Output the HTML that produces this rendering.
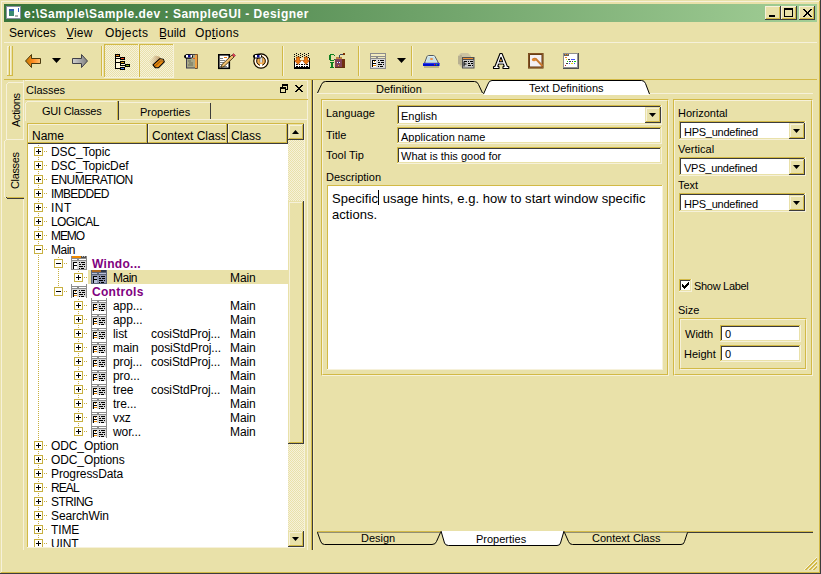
<!DOCTYPE html>
<html><head><meta charset="utf-8">
<style>
*{margin:0;padding:0;box-sizing:border-box}
html,body{width:821px;height:574px;overflow:hidden;background:#E9E1A9}
body{position:relative;font-family:"Liberation Sans",sans-serif;font-size:11px;color:#000}
.a{position:absolute}
.t{position:absolute;white-space:pre;line-height:13px;font-size:11px;margin-left:-1px}
.hl{background:#F6F1DA}
.sh{background:#D2B946}
.dk{background:#3C3C3C}
.wh{background:#fff}
.fc{background:#E9E1A9}
u{text-decoration:none;border-bottom:1px solid #000}
</style></head><body>

<!-- window frame -->
<div class="a hl" style="left:1px;top:1px;width:818px;height:1px"></div>
<div class="a hl" style="left:1px;top:1px;width:1px;height:571px"></div>
<div class="a sh" style="left:1px;top:572px;width:819px;height:1px"></div>
<div class="a sh" style="left:819px;top:1px;width:1px;height:572px"></div>
<div class="a dk" style="left:0;top:573px;width:821px;height:1px"></div>
<div class="a dk" style="left:820px;top:0;width:1px;height:574px"></div>

<!-- title bar -->
<div class="a" style="left:4px;top:4px;width:813px;height:18px;background:linear-gradient(to right,#38743A,#A2CE96)"></div>
<svg class="a" style="left:6px;top:6px" width="15" height="13" viewBox="0 0 15 13">
<rect x="0" y="0" width="15" height="13" fill="#fff"/>
<rect x="0.5" y="0.5" width="14" height="12" fill="none" stroke="#8890A0"/>
<rect x="3" y="3" width="5" height="7" fill="#3A8A70"/>
<rect x="3" y="3" width="5" height="2" fill="#3060B0"/>
<rect x="9" y="9" width="3" height="2" fill="#B0B0B0"/>
<rect x="12" y="2" width="1" height="4" fill="#3060C0"/>
</svg>
<div class="t" style="left:25px;top:6px;font-weight:bold;font-size:12px;letter-spacing:0.5px;color:#fff;line-height:17px">e:\Sample\Sample.dev : SampleGUI - Designer</div>


<!-- title buttons -->
<div class="a" style="left:765px;top:6px;width:16px;height:14px;background:#3C3C3C"></div>
<div class="a" style="left:765px;top:6px;width:15px;height:13px;background:#F6F1DA"></div>
<div class="a" style="left:766px;top:7px;width:14px;height:12px;background:#D2B946"></div>
<div class="a" style="left:766px;top:7px;width:13px;height:11px;background:#E9E1A9"></div>
<div class="a" style="left:769px;top:15px;width:6px;height:2px;background:#000"></div>

<div class="a" style="left:781px;top:6px;width:16px;height:14px;background:#3C3C3C"></div>
<div class="a" style="left:781px;top:6px;width:15px;height:13px;background:#F6F1DA"></div>
<div class="a" style="left:782px;top:7px;width:14px;height:12px;background:#D2B946"></div>
<div class="a" style="left:782px;top:7px;width:13px;height:11px;background:#E9E1A9"></div>
<div class="a" style="left:784px;top:8px;width:9px;height:9px;border:1px solid #000;border-top-width:2px"></div>

<div class="a" style="left:799px;top:6px;width:16px;height:14px;background:#3C3C3C"></div>
<div class="a" style="left:799px;top:6px;width:15px;height:13px;background:#F6F1DA"></div>
<div class="a" style="left:800px;top:7px;width:14px;height:12px;background:#D2B946"></div>
<div class="a" style="left:800px;top:7px;width:13px;height:11px;background:#E9E1A9"></div>
<svg class="a" style="left:803px;top:9px" width="9" height="8" viewBox="0 0 9 8" shape-rendering="crispEdges">
<path d="M0 0h2v1h-2zM7 0h2v1h-2zM1 1h2v1h-2zM6 1h2v1h-2zM2 2h2v1h-2zM5 2h2v1h-2zM3 3h3v2h-3zM2 5h2v1h-2zM5 5h2v1h-2zM1 6h2v1h-2zM6 6h2v1h-2zM0 7h2v1h-2zM7 7h2v1h-2z" fill="#000"/>
</svg>

<!-- menu -->
<div class="t" style="left:10px;top:26px;font-size:12px;line-height:15px;letter-spacing:0.1px">Services</div>
<div class="t" style="left:67px;top:26px;font-size:12px;line-height:15px;letter-spacing:0.2px">View</div>
<div class="t" style="left:106px;top:26px;font-size:12px;line-height:15px;letter-spacing:0.4px">Objects</div>
<div class="t" style="left:160px;top:26px;font-size:12px;line-height:15px;letter-spacing:0px">Build</div>
<div class="t" style="left:196px;top:26px;font-size:12px;line-height:15px;letter-spacing:0.4px">Options</div>
<div class="a" style="left:67px;top:38px;width:6px;height:1px;background:#000"></div>
<div class="a" style="left:160px;top:38px;width:6px;height:1px;background:#000"></div>
<div class="a" style="left:212px;top:38px;width:4px;height:1px;background:#000"></div>

<!-- toolbar -->
<div class="a hl" style="left:7px;top:46px;width:1px;height:30px"></div>
<div class="a hl" style="left:7px;top:46px;width:2px;height:1px"></div>
<div class="a sh" style="left:9px;top:46px;width:1px;height:30px"></div>
<div class="a sh" style="left:7px;top:75px;width:3px;height:1px"></div>
<div class="a hl" style="left:10px;top:46px;width:1px;height:30px"></div>
<div class="a sh" style="left:12px;top:46px;width:1px;height:30px"></div>
<div class="a sh" style="left:10px;top:75px;width:3px;height:1px"></div>

<svg class="a" style="left:24px;top:53px" width="18" height="16" viewBox="0 0 18 16">
<defs><linearGradient id="gb" x1="0" x2="1"><stop offset="0" stop-color="#C07800"/><stop offset="0.5" stop-color="#FF8A20"/><stop offset="1" stop-color="#FFC070"/></linearGradient>
<linearGradient id="gf" x1="0" x2="1"><stop offset="0" stop-color="#D0D0D0"/><stop offset="1" stop-color="#808080"/></linearGradient></defs>
<path d="M1.5 8 L7.5 1.5 V5.5 H16.5 V10.5 H7.5 V14.5 Z" fill="url(#gb)" stroke="#4A3A10" stroke-width="1"/>
</svg>
<svg class="a" style="left:52px;top:58px" width="9" height="5" viewBox="0 0 9 5"><path d="M0 0H9L4.5 5Z" fill="#000"/></svg>
<svg class="a" style="left:71px;top:53px" width="18" height="16" viewBox="0 0 18 16">
<path d="M16.5 8 L10.5 1.5 V5.5 H1.5 V10.5 H10.5 V14.5 Z" fill="url(#gf)" stroke="#404048" stroke-width="1"/>
</svg>
<div class="a sh" style="left:101px;top:46px;width:1px;height:30px"></div>
<div class="a hl" style="left:102px;top:46px;width:1px;height:30px"></div>

<!-- pressed buttons -->
<div class="a" style="left:104px;top:44px;width:35px;height:34px;background:#F6F1DA"></div>
<div class="a" style="left:104px;top:44px;width:34px;height:33px;background:#D2B946"></div>
<div class="a" style="left:105px;top:45px;width:33px;height:32px;background-color:#EDE6BC;background-image:repeating-conic-gradient(#F6F1DA 0 25%,#E9E1A9 0 50%);background-size:2px 2px"></div>
<div class="a" style="left:139px;top:44px;width:35px;height:34px;background:#F6F1DA"></div>
<div class="a" style="left:139px;top:44px;width:34px;height:33px;background:#D2B946"></div>
<div class="a" style="left:140px;top:45px;width:33px;height:32px;background-image:repeating-conic-gradient(#F6F1DA 0 25%,#E9E1A9 0 50%);background-size:2px 2px"></div>

<!-- tree icon -->
<svg class="a" style="left:115px;top:54px" width="16" height="16" viewBox="0 0 16 16" shape-rendering="crispEdges">
<rect x="1" y="3" width="4" height="11" fill="#FFF8DC"/>
<rect x="0" y="0" width="1" height="15" fill="#000"/>
<rect x="0" y="4" width="6" height="1" fill="#000"/><rect x="0" y="8" width="6" height="1" fill="#000"/><rect x="0" y="14" width="6" height="1" fill="#000"/>
<rect x="0" y="0" width="5" height="3" fill="#000"/><rect x="1" y="1" width="3" height="1" fill="#F09020"/>
<rect x="5" y="3" width="5" height="3" fill="#000"/><rect x="6" y="4" width="3" height="1" fill="#F04818"/>
<rect x="5" y="7" width="5" height="3" fill="#000"/><rect x="6" y="8" width="3" height="1" fill="#D8A020"/>
<rect x="5" y="9" width="1" height="3" fill="#000"/><rect x="5" y="11" width="6" height="1" fill="#000"/>
<rect x="6" y="10" width="4" height="1" fill="#FFF8DC"/>
<rect x="10" y="10" width="5" height="3" fill="#000"/><rect x="11" y="11" width="3" height="1" fill="#80A010"/>
<rect x="5" y="13" width="5" height="3" fill="#000"/><rect x="6" y="14" width="3" height="1" fill="#5080F0"/>
</svg>
<!-- eraser icon -->
<svg class="a" style="left:146px;top:53px" width="20" height="17" viewBox="146 53 20 17">
<defs><linearGradient id="gh" x1="0" y1="0" x2="1" y2="0"><stop offset="0" stop-color="#E0D0B0" stop-opacity="0.3"/><stop offset="1" stop-color="#A06830" stop-opacity="0.9"/></linearGradient></defs>
<path d="M149 61.5 L155 55.5 L159 56.5 L161.5 59 L155 66 L151.5 64.5 Z" fill="url(#gh)" opacity="0.8"/>
<path d="M153 64.8 L159.6 58.8 L163.2 59.2 L164.3 61.8 L158.6 67.6 L155.2 67.7 Z" fill="#E88A10" stroke="#000" stroke-width="1.1" stroke-linejoin="round"/>
<path d="M159.8 59.5 L163 59.8 L163.6 61.5 L160.5 61.3 Z" fill="#F8A840"/>
<path d="M155 66.3 L160.8 60.8 L163.8 61.2" stroke="#603000" stroke-width="0.7" fill="none"/>
</svg>
<!-- book icon -->
<svg class="a" style="left:183px;top:52px" width="17" height="18" viewBox="183 52 17 18">
<rect x="186.5" y="54.5" width="10" height="13.5" fill="#A8A888" stroke="#404050" stroke-width="1"/>
<rect x="195" y="54" width="2.5" height="14" fill="#F0A040"/>
<path d="M195 54.5H197.5V68.5H195" fill="none" stroke="#604020" stroke-width="0.8"/>
<path d="M188 61h3M189 63h4M188 65h5" stroke="#707058" stroke-width="1"/>
<rect x="193" y="58" width="2" height="1" fill="#E06020"/>
<ellipse cx="188.5" cy="56.5" rx="4.5" ry="2.3" fill="#000"/>
<rect x="186" y="55" width="6" height="2.5" fill="#fff"/>
<rect x="188" y="55" width="2.5" height="2.5" fill="#101090"/>
</svg>
<!-- notepad icon -->
<svg class="a" style="left:216px;top:52px" width="20" height="18" viewBox="216 52 20 18">
<rect x="218.8" y="54.8" width="10.5" height="13.5" fill="#fff" stroke="#000" stroke-width="1.6"/>
<rect x="220" y="58" width="3" height="1" fill="#808080"/><rect x="220" y="60" width="5" height="1" fill="#808080"/><rect x="220" y="62" width="4" height="1" fill="#808080"/><rect x="220" y="64" width="3" height="1" fill="#808080"/><rect x="220" y="66" width="7" height="1" fill="#808080"/>
<rect x="224" y="57" width="3" height="1" fill="#F08010"/>
<path d="M221 67.5 L222 64.5 L232 55 L234 57 L224 66.5 Z" fill="#F0C070" stroke="#403010" stroke-width="0.9"/>
<path d="M232 55 L233.5 53.5 L235.5 55.5 L234 57 Z" fill="#E04050" stroke="#803040" stroke-width="0.6"/>
</svg>
<!-- clock icon -->
<svg class="a" style="left:252px;top:52px" width="18" height="18" viewBox="252 52 18 18">
<circle cx="261" cy="61" r="7.2" fill="#F8B050" stroke="#000" stroke-width="1.2"/>
<circle cx="261" cy="61" r="5.6" fill="none" stroke="#fff" stroke-width="1.4"/>
<circle cx="261" cy="61" r="4.3" fill="none" stroke="#000" stroke-width="0.9"/>
<rect x="260" y="57" width="2.2" height="5.5" fill="#fff"/><rect x="260" y="64" width="2.2" height="2" fill="#fff"/>
<path d="M260 57v5.5M262.2 57v5.5" stroke="#303030" stroke-width="0.5"/>
<ellipse cx="257.5" cy="56.3" rx="4.5" ry="2.5" fill="#000"/>
<rect x="255" y="55" width="6" height="2.5" fill="#fff"/>
<rect x="257" y="55" width="2.5" height="2.5" fill="#101090"/>
</svg>
<div class="a sh" style="left:282px;top:46px;width:1px;height:30px"></div>
<div class="a hl" style="left:283px;top:46px;width:1px;height:30px"></div>
<!-- grid arrows icon -->
<svg class="a" style="left:290px;top:50px" width="24" height="22" viewBox="290 50 24 22" shape-rendering="crispEdges">
<rect x="296" y="53" width="1" height="1" fill="#000"/><rect x="300" y="53" width="1" height="1" fill="#000"/><rect x="304" y="53" width="1" height="1" fill="#000"/><rect x="308" y="53" width="1" height="1" fill="#000"/><rect x="294" y="54" width="1" height="1" fill="#000"/><rect x="298" y="54" width="1" height="1" fill="#000"/><rect x="302" y="54" width="1" height="1" fill="#000"/><rect x="306" y="54" width="1" height="1" fill="#000"/><rect x="296" y="55" width="1" height="1" fill="#000"/><rect x="300" y="55" width="1" height="1" fill="#000"/><rect x="304" y="55" width="1" height="1" fill="#000"/><rect x="308" y="55" width="1" height="1" fill="#000"/><rect x="294" y="56" width="1" height="1" fill="#000"/><rect x="298" y="56" width="1" height="1" fill="#000"/><rect x="302" y="56" width="1" height="1" fill="#000"/><rect x="306" y="56" width="1" height="1" fill="#000"/><rect x="296" y="57" width="1" height="1" fill="#000"/><rect x="300" y="57" width="1" height="1" fill="#000"/><rect x="304" y="57" width="1" height="1" fill="#000"/><rect x="308" y="57" width="1" height="1" fill="#000"/>
<rect x="294" y="58" width="16" height="11" fill="#000"/>
<rect x="295" y="58" width="14" height="9" fill="#fff"/><rect x="295" y="58" width="14" height="3" fill="#F4EEC8"/>
<rect x="296" y="64" width="2" height="1" fill="#000"/><rect x="299" y="64" width="1" height="1" fill="#000"/><rect x="301" y="64" width="2" height="1" fill="#000"/><rect x="304" y="64" width="1" height="1" fill="#000"/><rect x="306" y="64" width="2" height="1" fill="#000"/>
<rect x="296" y="66" width="2" height="1" fill="#000"/><rect x="299" y="66" width="1" height="1" fill="#000"/><rect x="301" y="66" width="2" height="1" fill="#000"/><rect x="304" y="66" width="1" height="1" fill="#000"/><rect x="306" y="66" width="2" height="1" fill="#000"/>
<path d="M296.5 57h3v3.5h2L298 64.5L294.5 60.5h2Z M304.5 57h3v3.5h2L306 64.5L302.5 60.5h2Z" fill="#F07810" stroke="#A04000" stroke-width="0.6" shape-rendering="geometricPrecision"/>
</svg>
<!-- CI icon -->
<svg class="a" style="left:325px;top:50px" width="24" height="22" viewBox="325 50 24 22" shape-rendering="crispEdges">
<rect x="330" y="54" width="4" height="1" fill="#108020"/><rect x="329" y="55" width="2" height="5" fill="#108020"/><rect x="330" y="60" width="4" height="1" fill="#108020"/><rect x="334" y="55" width="1" height="1" fill="#108020"/><rect x="334" y="59" width="1" height="1" fill="#108020"/>
<rect x="330" y="62" width="4" height="1" fill="#108020"/><rect x="331" y="62" width="2" height="6" fill="#108020"/><rect x="330" y="67" width="4" height="1" fill="#108020"/>
<rect x="335" y="59" width="9" height="9" fill="#804058"/>
<rect x="342" y="59" width="3" height="9" fill="#703010"/>
<rect x="335" y="67" width="10" height="1" fill="#603010"/>
<rect x="336" y="57" width="6" height="2" fill="#C08040"/>
<rect x="339" y="55" width="1" height="3" fill="#404860"/><rect x="340" y="54" width="4" height="1" fill="#404860"/>
<rect x="343" y="53" width="2" height="2" fill="#803000"/>
<rect x="337" y="62" width="3" height="1" fill="#fff"/><rect x="338" y="62" width="1" height="1" fill="#2030A0"/>
<rect x="338" y="65" width="1" height="1" fill="#F0A040"/>
</svg>
<div class="a sh" style="left:358px;top:46px;width:1px;height:30px"></div>
<div class="a hl" style="left:359px;top:46px;width:1px;height:30px"></div>
<!-- form icon -->
<svg class="a" style="left:370px;top:53px" width="16" height="16" viewBox="0 0 16 16" shape-rendering="crispEdges">
<rect x="0" y="0" width="16" height="16" fill="#8C8C8C"/>
<rect x="1" y="1" width="14" height="2" fill="#F2EBC0"/>
<rect x="1" y="4" width="5" height="1" fill="#F2EBC0"/><rect x="8" y="4" width="7" height="1" fill="#F2EBC0"/>
<rect x="1" y="6" width="14" height="9" fill="#D8D8D8"/>
<g transform="translate(0,1)">
<rect x="3" y="7" width="3" height="2" fill="#fff"/><rect x="3" y="10" width="3" height="3" fill="#fff"/>
<rect x="4" y="7" width="1" height="1" fill="#F08A00"/><rect x="3" y="11" width="3" height="1" fill="#F08A00"/>
<use href="#ic_body_dash" fill="#000"/>
</g>
</svg>
<svg class="a" style="left:397px;top:58px" width="9" height="5" viewBox="0 0 9 5"><path d="M0 0H9L4.5 5Z" fill="#000"/></svg>
<div class="a sh" style="left:411px;top:46px;width:1px;height:30px"></div>
<div class="a hl" style="left:412px;top:46px;width:1px;height:30px"></div>
<!-- drive icon -->
<svg class="a" style="left:418px;top:50px" width="26" height="22" viewBox="418 50 26 22">
<path d="M424.5 63 L427 56.5 Q427.5 55.5 428.5 55.5 L433.5 55.5 Q434.5 55.5 435 56.5 L438.5 63 Z" fill="#E0F0F0" stroke="#505860" stroke-width="1"/>
<path d="M426 62.5 L428 57 L434 57 L437 62.5Z" fill="#C8E0E8"/>
<ellipse cx="431.5" cy="59" rx="1.6" ry="1" fill="#F09040"/>
<rect x="423" y="63" width="16.5" height="3" fill="#0010D0"/>
<rect x="423" y="63" width="16.5" height="0.8" fill="#3040F0"/>
<rect x="434" y="64" width="1.2" height="1.2" fill="#E02020"/><rect x="436" y="64" width="1.2" height="1.2" fill="#20C020"/>
<rect x="424" y="66" width="15" height="2" fill="#A09870" opacity="0.6"/>
</svg>
<!-- gears/box icon -->
<svg class="a" style="left:456px;top:51px" width="20" height="19" viewBox="456 51 20 19">
<path d="M458 56 L461 53 H468 L471 56 V66 L462 68 L458 64 Z" fill="#C0B8A0" opacity="0.75"/>
<path d="M459 56v8M461 55v10" stroke="#908870" stroke-width="0.8" opacity="0.8"/>
<rect x="462" y="57" width="12.5" height="11.5" fill="#505050"/>
<rect x="463" y="58" width="10" height="1" fill="#F09030"/>
<rect x="463" y="60" width="10.5" height="7.5" fill="#C8C8C8"/>
<path d="M464 61.5h3M464 61.5v5M464 64h2.5" stroke="#000" stroke-width="1"/>
<path d="M468 61.5h1M470 61.5h3M468 63.5h2M471 63.5h2M468 65.5h3M472 65.5h1" stroke="#000" stroke-width="1"/>
</svg>
<!-- A icon -->
<svg class="a" style="left:490px;top:51px" width="22" height="20" viewBox="490 51 22 20">
<path d="M500 53.5 H502 L507.3 66.2 L508.8 66.8 V68.5 H503 V66.8 L504.2 66.2 L503.4 64 H498.6 L497.8 66.2 L499 66.8 V68.5 H493.5 V66.8 L495 66.2 Z M499.4 61.8 H502.6 L501 57.3 Z" fill="#fff" fill-rule="evenodd" stroke="#000" stroke-width="1.1" stroke-linejoin="round"/>
<rect x="497.5" y="62.5" width="7" height="1.2" fill="#B0B0C0" opacity="0.6"/>
<circle cx="500.6" cy="60.3" r="0.7" fill="#F08010"/>
</svg>
<!-- picture icon -->
<svg class="a" style="left:526px;top:51px" width="20" height="20" viewBox="526 51 20 20">
<rect x="528" y="53" width="15.5" height="15.5" fill="#5A3410"/>
<rect x="528.8" y="53.8" width="14" height="14" fill="none" stroke="#A06830" stroke-width="0.8"/>
<rect x="530" y="55" width="11.5" height="11.5" fill="#F4F0F4"/>
<path d="M532.5 60 Q533.5 58 536 59 L542.5 66" stroke="#C87830" stroke-width="2" fill="none"/>
<ellipse cx="534" cy="60" rx="2" ry="1.3" fill="#E08830"/>
</svg>
<!-- form2 icon -->
<svg class="a" style="left:562px;top:52px" width="18" height="18" viewBox="562 52 18 18" shape-rendering="crispEdges">
<rect x="563" y="53" width="16" height="16" fill="#505050"/>
<rect x="563" y="53" width="15" height="15" fill="#909090"/>
<rect x="564" y="54" width="13" height="13" fill="#fff"/>
<rect x="564" y="54" width="5" height="2" fill="#606060"/>
<rect x="565" y="54" width="1" height="1" fill="#F09020"/><rect x="567" y="54" width="1" height="1" fill="#F09020"/>
<rect x="565" y="57" width="2" height="1" fill="#F08020"/>
<rect x="566" y="59" width="1" height="1" fill="#E8E000"/><rect x="568" y="59" width="2" height="1" fill="#404040"/><rect x="571" y="59" width="4" height="1" fill="#4050F0"/>
<rect x="567" y="61" width="1" height="1" fill="#10D010"/><rect x="569" y="61" width="2" height="1" fill="#404040"/><rect x="572" y="61" width="1" height="1" fill="#404040"/><rect x="574" y="61" width="2" height="1" fill="#10D010"/>
<rect x="566" y="63" width="2" height="1" fill="#404040"/><rect x="569" y="63" width="1" height="1" fill="#4050F0"/><rect x="571" y="63" width="2" height="1" fill="#E8E000"/><rect x="574" y="63" width="1" height="1" fill="#4050F0"/>
<rect x="565" y="65" width="1" height="1" fill="#C02020"/>
</svg>

<div class="a hl" style="left:4px;top:42px;width:813px;height:1px"></div>
<div class="a sh" style="left:4px;top:79px;width:813px;height:1px"></div>


<!-- ===== LEFT DOCK ===== -->
<!-- vertical tabs -->
<div class="a hl" style="left:23px;top:80px;width:1px;height:60px"></div>
<div class="a hl" style="left:8px;top:82px;width:15px;height:1px"></div>
<div class="a hl" style="left:7px;top:83px;width:1px;height:1px"></div>
<div class="a hl" style="left:6px;top:84px;width:1px;height:56px"></div>
<div class="a hl" style="left:6px;top:139px;width:18px;height:1px"></div>
<div class="t" style="left:11px;top:92px;width:36px;height:13px;transform-origin:0 0;transform:translate(0,35px) rotate(-90deg);letter-spacing:-0.35px">Actions</div>
<div class="a hl" style="left:5px;top:140px;width:1px;height:1px"></div>
<div class="a hl" style="left:4px;top:141px;width:1px;height:56px"></div>
<div class="a hl" style="left:5px;top:197px;width:1px;height:1px"></div>
<div class="a sh" style="left:7px;top:197px;width:17px;height:1px"></div>
<div class="a dk" style="left:6px;top:197px;width:1px;height:1px"></div>
<div class="a dk" style="left:7px;top:198px;width:17px;height:1px"></div>
<div class="a hl" style="left:23px;top:199px;width:1px;height:351px"></div>
<div class="t" style="left:10px;top:153px;width:37px;height:13px;transform-origin:0 0;transform:translate(0,36px) rotate(-90deg);letter-spacing:-0.35px">Classes</div>

<!-- dock header -->
<div class="a hl" style="left:25px;top:80px;width:283px;height:1px"></div>
<div class="a hl" style="left:307px;top:80px;width:1px;height:470px"></div>
<div class="t" style="left:27px;top:84px">Classes</div>
<svg class="a" style="left:280px;top:84px" width="8" height="9" viewBox="0 0 8 9" shape-rendering="crispEdges">
<rect x="2" y="0" width="6" height="2" fill="#000"/><rect x="7" y="2" width="1" height="4" fill="#000"/><rect x="2" y="2" width="1" height="1" fill="#000"/><rect x="6" y="5" width="1" height="1" fill="#000"/>
<rect x="0" y="3" width="6" height="2" fill="#000"/><rect x="0" y="5" width="1" height="4" fill="#000"/><rect x="5" y="5" width="1" height="4" fill="#000"/><rect x="0" y="8" width="6" height="1" fill="#000"/>
</svg>
<svg class="a" style="left:295px;top:85px" width="8" height="7" viewBox="0 0 8 7" shape-rendering="crispEdges">
<path d="M0 0h2v1h-2zM6 0h2v1h-2zM1 1h2v1h-2zM5 1h2v1h-2zM2 2h4v1h-4zM3 3h2v1h-2zM2 4h4v1h-4zM1 5h2v1h-2zM5 5h2v1h-2zM0 6h2v1h-2zM6 6h2v1h-2z" fill="#000"/>
</svg>
<div class="a sh" style="left:25px;top:99px;width:283px;height:1px"></div>

<!-- dock tabs -->
<div class="a hl" style="left:27px;top:101px;width:90px;height:1px"></div>
<div class="a hl" style="left:26px;top:102px;width:1px;height:1px"></div>
<div class="a hl" style="left:25px;top:103px;width:1px;height:18px"></div>
<div class="a sh" style="left:117px;top:101px;width:1px;height:19px"></div>
<div class="a dk" style="left:118px;top:101px;width:1px;height:19px"></div>
<div class="t" style="left:43px;top:105px;letter-spacing:-0.2px">GUI Classes</div>
<div class="a hl" style="left:119px;top:102px;width:91px;height:1px"></div>
<div class="a dk" style="left:210px;top:103px;width:1px;height:16px"></div>
<div class="t" style="left:141px;top:106px">Properties</div>
<div class="a hl" style="left:119px;top:119px;width:188px;height:1px"></div>

<!-- list frame -->
<div class="a sh" style="left:27px;top:123px;width:277px;height:1px"></div>
<div class="a sh" style="left:27px;top:123px;width:1px;height:424px"></div>
<div class="a hl" style="left:27px;top:547px;width:278px;height:1px"></div>
<div class="a hl" style="left:304px;top:123px;width:1px;height:425px"></div>
<div class="a wh" style="left:28px;top:144px;width:260px;height:403px"></div>

<!-- header -->
<!--HDR--><div class="a dk" style="left:28px;top:124px;width:120px;height:20px"></div><div class="a sh" style="left:28px;top:124px;width:119px;height:19px"></div><div class="a hl" style="left:28px;top:124px;width:118px;height:18px"></div><div class="a fc" style="left:29px;top:125px;width:117px;height:17px"></div><div class="a dk" style="left:148px;top:124px;width:80px;height:20px"></div><div class="a sh" style="left:148px;top:124px;width:79px;height:19px"></div><div class="a hl" style="left:148px;top:124px;width:78px;height:18px"></div><div class="a fc" style="left:149px;top:125px;width:77px;height:17px"></div><div class="a dk" style="left:228px;top:124px;width:60px;height:20px"></div><div class="a sh" style="left:228px;top:124px;width:59px;height:19px"></div><div class="a hl" style="left:228px;top:124px;width:58px;height:18px"></div><div class="a fc" style="left:229px;top:125px;width:57px;height:17px"></div><div class="t" style="left:33px;top:130px;font-size:12px">Name</div><div class="a" style="left:148px;top:124px;width:77px;height:18px;overflow:hidden"><div class="t" style="left:5px;top:6px;font-size:12px">Context Class</div></div><div class="t" style="left:232px;top:130px;font-size:12px">Class</div><!--/HDR-->

<!-- scrollbar -->
<div class="a" style="left:288px;top:140px;width:16px;height:391px;background-image:repeating-conic-gradient(#F6F1DA 0 25%,#E9E1A9 0 50%);background-size:2px 2px"></div>
<!--SB--><div class="a dk" style="left:288px;top:124px;width:16px;height:16px"></div><div class="a fc" style="left:288px;top:124px;width:15px;height:15px"></div><div class="a sh" style="left:289px;top:125px;width:14px;height:14px"></div><div class="a hl" style="left:289px;top:125px;width:13px;height:13px"></div><div class="a fc" style="left:290px;top:126px;width:12px;height:12px"></div><svg class="a" style="left:292px;top:130px" width="7" height="4" viewBox="0 0 7 4"><path d="M3.5 0L7 4H0Z" fill="#000"/></svg><div class="a dk" style="left:288px;top:531px;width:16px;height:16px"></div><div class="a fc" style="left:288px;top:531px;width:15px;height:15px"></div><div class="a sh" style="left:289px;top:532px;width:14px;height:14px"></div><div class="a hl" style="left:289px;top:532px;width:13px;height:13px"></div><div class="a fc" style="left:290px;top:533px;width:12px;height:12px"></div><svg class="a" style="left:292px;top:537px" width="7" height="4" viewBox="0 0 7 4"><path d="M0 0H7L3.5 4Z" fill="#000"/></svg><div class="a dk" style="left:288px;top:201px;width:16px;height:243px"></div><div class="a fc" style="left:288px;top:201px;width:15px;height:242px"></div><div class="a sh" style="left:289px;top:202px;width:14px;height:241px"></div><div class="a hl" style="left:289px;top:202px;width:13px;height:240px"></div><div class="a fc" style="left:290px;top:203px;width:12px;height:239px"></div><!--/SB-->

<!-- tree -->
<!--TREE--><svg width="0" height="0" style="position:absolute">
<defs>
<g id="ic_body_dash">
<rect x="8" y="6" width="1" height="1"/><rect x="10" y="6" width="4" height="1"/>
<rect x="8" y="8" width="2" height="1"/><rect x="11" y="8" width="3" height="1"/>
<rect x="8" y="10" width="4" height="1"/><rect x="13" y="10" width="1" height="1"/>
<rect x="8" y="12" width="1" height="1"/><rect x="10" y="12" width="3" height="1"/>
<rect x="2" y="6" width="4" height="1"/><rect x="2" y="6" width="1" height="7"/><rect x="2" y="9" width="4" height="1"/>
</g>
<g id="ic_win" shape-rendering="crispEdges">
<rect x="0" y="0" width="16" height="14" fill="#8C8C8C"/>
<rect x="1" y="0" width="9" height="2" fill="#F08A00"/>
<rect x="10" y="0" width="5" height="2" fill="#505050"/>
<rect x="11" y="0" width="1" height="1" fill="#C0C0C0"/><rect x="13" y="0" width="1" height="1" fill="#C0C0C0"/>
<rect x="1" y="3" width="5" height="1" fill="#fff"/><rect x="8" y="3" width="7" height="1" fill="#fff"/>
<rect x="1" y="5" width="14" height="8" fill="#D8D8D8"/>
<rect x="3" y="7" width="3" height="2" fill="#fff"/><rect x="3" y="10" width="3" height="3" fill="#fff"/>
<use href="#ic_body_dash" fill="#000"/>
</g>
<g id="ic_sel" shape-rendering="crispEdges">
<rect x="0" y="0" width="16" height="14" fill="#5A6478"/>
<rect x="1" y="0" width="9" height="2" fill="#B06A20"/>
<rect x="10" y="0" width="5" height="2" fill="#303848"/>
<rect x="1" y="3" width="5" height="1" fill="#B8C0D8"/><rect x="8" y="3" width="7" height="1" fill="#B8C0D8"/>
<rect x="1" y="5" width="14" height="8" fill="#9098B0"/>
<rect x="3" y="7" width="3" height="2" fill="#B8C0D8"/><rect x="3" y="10" width="3" height="3" fill="#B8C0D8"/>
<use href="#ic_body_dash" fill="#000"/>
</g>
<g id="ic_ctl" shape-rendering="crispEdges">
<rect x="0" y="0" width="1" height="14" fill="#8C8C8C"/><rect x="15" y="0" width="1" height="14" fill="#8C8C8C"/>
<rect x="0" y="2" width="16" height="3" fill="#8C8C8C"/>
<rect x="1" y="3" width="5" height="1" fill="#fff"/><rect x="8" y="3" width="7" height="1" fill="#fff"/>
<rect x="1" y="5" width="14" height="8" fill="#D8D8D8"/>
<rect x="3" y="7" width="3" height="2" fill="#fff"/><rect x="3" y="10" width="3" height="3" fill="#fff"/>
<rect x="4" y="7" width="1" height="1" fill="#F08A00"/><rect x="3" y="11" width="3" height="1" fill="#F08A00"/>
<use href="#ic_body_dash" fill="#000"/>
</g>
</defs></svg><div class="a" style="left:28px;top:144px;width:260px;height:403px;overflow:hidden">
<div class="a" style="left:10px;top:1px;width:1px;height:402px;background-image:linear-gradient(to bottom,#C8B040 50%,transparent 50%);background-size:1px 2px"></div>
<div class="a" style="left:30px;top:113px;width:1px;height:35px;background-image:linear-gradient(to bottom,#C8B040 50%,transparent 50%);background-size:1px 2px"></div>
<div class="a" style="left:50px;top:127px;width:1px;height:7px;background-image:linear-gradient(to bottom,#C8B040 50%,transparent 50%);background-size:1px 2px"></div>
<div class="a" style="left:50px;top:155px;width:1px;height:133px;background-image:linear-gradient(to bottom,#C8B040 50%,transparent 50%);background-size:1px 2px"></div>
<div class="a" style="left:16px;top:7px;width:4px;height:1px;background-image:linear-gradient(to right,#C8B040 50%,transparent 50%);background-size:2px 1px"></div>
<div class="a" style="left:6px;top:3px;width:9px;height:9px;border:1px solid #C8B040;background:#fff"></div>
<div class="a" style="left:8px;top:7px;width:5px;height:1px;background:#000"></div>
<div class="a" style="left:10px;top:5px;width:1px;height:5px;background:#000"></div>
<div class="t" style="left:24px;top:2px;font-size:12px;letter-spacing:-0.1px">DSC_Topic</div>
<div class="a" style="left:16px;top:21px;width:4px;height:1px;background-image:linear-gradient(to right,#C8B040 50%,transparent 50%);background-size:2px 1px"></div>
<div class="a" style="left:6px;top:17px;width:9px;height:9px;border:1px solid #C8B040;background:#fff"></div>
<div class="a" style="left:8px;top:21px;width:5px;height:1px;background:#000"></div>
<div class="a" style="left:10px;top:19px;width:1px;height:5px;background:#000"></div>
<div class="t" style="left:24px;top:16px;font-size:12px;letter-spacing:-0.1px">DSC_TopicDef</div>
<div class="a" style="left:16px;top:35px;width:4px;height:1px;background-image:linear-gradient(to right,#C8B040 50%,transparent 50%);background-size:2px 1px"></div>
<div class="a" style="left:6px;top:31px;width:9px;height:9px;border:1px solid #C8B040;background:#fff"></div>
<div class="a" style="left:8px;top:35px;width:5px;height:1px;background:#000"></div>
<div class="a" style="left:10px;top:33px;width:1px;height:5px;background:#000"></div>
<div class="t" style="left:24px;top:30px;font-size:12px;letter-spacing:-0.55px">ENUMERATION</div>
<div class="a" style="left:16px;top:49px;width:4px;height:1px;background-image:linear-gradient(to right,#C8B040 50%,transparent 50%);background-size:2px 1px"></div>
<div class="a" style="left:6px;top:45px;width:9px;height:9px;border:1px solid #C8B040;background:#fff"></div>
<div class="a" style="left:8px;top:49px;width:5px;height:1px;background:#000"></div>
<div class="a" style="left:10px;top:47px;width:1px;height:5px;background:#000"></div>
<div class="t" style="left:24px;top:44px;font-size:12px;letter-spacing:-0.7px">IMBEDDED</div>
<div class="a" style="left:16px;top:63px;width:4px;height:1px;background-image:linear-gradient(to right,#C8B040 50%,transparent 50%);background-size:2px 1px"></div>
<div class="a" style="left:6px;top:59px;width:9px;height:9px;border:1px solid #C8B040;background:#fff"></div>
<div class="a" style="left:8px;top:63px;width:5px;height:1px;background:#000"></div>
<div class="a" style="left:10px;top:61px;width:1px;height:5px;background:#000"></div>
<div class="t" style="left:24px;top:58px;font-size:12px;letter-spacing:0.5px">INT</div>
<div class="a" style="left:16px;top:77px;width:4px;height:1px;background-image:linear-gradient(to right,#C8B040 50%,transparent 50%);background-size:2px 1px"></div>
<div class="a" style="left:6px;top:73px;width:9px;height:9px;border:1px solid #C8B040;background:#fff"></div>
<div class="a" style="left:8px;top:77px;width:5px;height:1px;background:#000"></div>
<div class="a" style="left:10px;top:75px;width:1px;height:5px;background:#000"></div>
<div class="t" style="left:24px;top:72px;font-size:12px;letter-spacing:-0.6px">LOGICAL</div>
<div class="a" style="left:16px;top:91px;width:4px;height:1px;background-image:linear-gradient(to right,#C8B040 50%,transparent 50%);background-size:2px 1px"></div>
<div class="a" style="left:6px;top:87px;width:9px;height:9px;border:1px solid #C8B040;background:#fff"></div>
<div class="a" style="left:8px;top:91px;width:5px;height:1px;background:#000"></div>
<div class="a" style="left:10px;top:89px;width:1px;height:5px;background:#000"></div>
<div class="t" style="left:24px;top:86px;font-size:12px;letter-spacing:-1.1px">MEMO</div>
<div class="a" style="left:16px;top:105px;width:4px;height:1px;background-image:linear-gradient(to right,#C8B040 50%,transparent 50%);background-size:2px 1px"></div>
<div class="a" style="left:6px;top:101px;width:9px;height:9px;border:1px solid #C8B040;background:#fff"></div>
<div class="a" style="left:8px;top:105px;width:5px;height:1px;background:#000"></div>
<div class="t" style="left:24px;top:100px;font-size:12px;letter-spacing:-0.5px">Main</div>
<div class="a" style="left:36px;top:119px;width:4px;height:1px;background-image:linear-gradient(to right,#C8B040 50%,transparent 50%);background-size:2px 1px"></div>
<div class="a" style="left:26px;top:115px;width:9px;height:9px;border:1px solid #C8B040;background:#fff"></div>
<div class="a" style="left:28px;top:119px;width:5px;height:1px;background:#000"></div>
<svg class="a" style="left:43px;top:112px" width="16" height="14"><use href="#ic_win"/></svg>
<div class="t" style="left:65px;top:114px;font-weight:bold;color:#800080;font-size:12px;letter-spacing:0.3px">Windo...</div>
<div class="a" style="left:60px;top:126px;width:200px;height:14px;background:#E9E1A9"></div>
<div class="a" style="left:56px;top:133px;width:4px;height:1px;background-image:linear-gradient(to right,#C8B040 50%,transparent 50%);background-size:2px 1px"></div>
<div class="a" style="left:46px;top:129px;width:9px;height:9px;border:1px solid #C8B040;background:#fff"></div>
<div class="a" style="left:48px;top:133px;width:5px;height:1px;background:#000"></div>
<div class="a" style="left:50px;top:131px;width:1px;height:5px;background:#000"></div>
<svg class="a" style="left:63px;top:126px" width="16" height="14"><use href="#ic_sel"/></svg>
<div class="t" style="left:86px;top:128px;font-size:12px;letter-spacing:-0.5px">Main</div>
<div class="t" style="left:203px;top:128px;font-size:12px;letter-spacing:-0.1px">Main</div>
<div class="a" style="left:36px;top:147px;width:4px;height:1px;background-image:linear-gradient(to right,#C8B040 50%,transparent 50%);background-size:2px 1px"></div>
<div class="a" style="left:26px;top:143px;width:9px;height:9px;border:1px solid #C8B040;background:#fff"></div>
<div class="a" style="left:28px;top:147px;width:5px;height:1px;background:#000"></div>
<svg class="a" style="left:43px;top:140px" width="16" height="14"><use href="#ic_ctl"/></svg>
<div class="t" style="left:65px;top:142px;font-weight:bold;color:#800080;font-size:12px;letter-spacing:0.3px">Controls</div>
<div class="a" style="left:56px;top:161px;width:4px;height:1px;background-image:linear-gradient(to right,#C8B040 50%,transparent 50%);background-size:2px 1px"></div>
<div class="a" style="left:46px;top:157px;width:9px;height:9px;border:1px solid #C8B040;background:#fff"></div>
<div class="a" style="left:48px;top:161px;width:5px;height:1px;background:#000"></div>
<div class="a" style="left:50px;top:159px;width:1px;height:5px;background:#000"></div>
<svg class="a" style="left:63px;top:154px" width="16" height="14"><use href="#ic_ctl"/></svg>
<div class="t" style="left:86px;top:156px;font-size:12px;letter-spacing:-0.1px">app...</div>
<div class="t" style="left:203px;top:156px;font-size:12px;letter-spacing:-0.1px">Main</div>
<div class="a" style="left:56px;top:175px;width:4px;height:1px;background-image:linear-gradient(to right,#C8B040 50%,transparent 50%);background-size:2px 1px"></div>
<div class="a" style="left:46px;top:171px;width:9px;height:9px;border:1px solid #C8B040;background:#fff"></div>
<div class="a" style="left:48px;top:175px;width:5px;height:1px;background:#000"></div>
<div class="a" style="left:50px;top:173px;width:1px;height:5px;background:#000"></div>
<svg class="a" style="left:63px;top:168px" width="16" height="14"><use href="#ic_ctl"/></svg>
<div class="t" style="left:86px;top:170px;font-size:12px;letter-spacing:-0.1px">app...</div>
<div class="t" style="left:203px;top:170px;font-size:12px;letter-spacing:-0.1px">Main</div>
<div class="a" style="left:56px;top:189px;width:4px;height:1px;background-image:linear-gradient(to right,#C8B040 50%,transparent 50%);background-size:2px 1px"></div>
<div class="a" style="left:46px;top:185px;width:9px;height:9px;border:1px solid #C8B040;background:#fff"></div>
<div class="a" style="left:48px;top:189px;width:5px;height:1px;background:#000"></div>
<div class="a" style="left:50px;top:187px;width:1px;height:5px;background:#000"></div>
<svg class="a" style="left:63px;top:182px" width="16" height="14"><use href="#ic_ctl"/></svg>
<div class="t" style="left:86px;top:184px;font-size:12px;letter-spacing:-0.1px">list</div>
<div class="t" style="left:124px;top:184px;font-size:12px;letter-spacing:-0.1px">cosiStdProj...</div>
<div class="t" style="left:203px;top:184px;font-size:12px;letter-spacing:-0.1px">Main</div>
<div class="a" style="left:56px;top:203px;width:4px;height:1px;background-image:linear-gradient(to right,#C8B040 50%,transparent 50%);background-size:2px 1px"></div>
<div class="a" style="left:46px;top:199px;width:9px;height:9px;border:1px solid #C8B040;background:#fff"></div>
<div class="a" style="left:48px;top:203px;width:5px;height:1px;background:#000"></div>
<div class="a" style="left:50px;top:201px;width:1px;height:5px;background:#000"></div>
<svg class="a" style="left:63px;top:196px" width="16" height="14"><use href="#ic_ctl"/></svg>
<div class="t" style="left:86px;top:198px;font-size:12px;letter-spacing:-0.1px">main</div>
<div class="t" style="left:124px;top:198px;font-size:12px;letter-spacing:-0.1px">posiStdProj...</div>
<div class="t" style="left:203px;top:198px;font-size:12px;letter-spacing:-0.1px">Main</div>
<div class="a" style="left:56px;top:217px;width:4px;height:1px;background-image:linear-gradient(to right,#C8B040 50%,transparent 50%);background-size:2px 1px"></div>
<div class="a" style="left:46px;top:213px;width:9px;height:9px;border:1px solid #C8B040;background:#fff"></div>
<div class="a" style="left:48px;top:217px;width:5px;height:1px;background:#000"></div>
<div class="a" style="left:50px;top:215px;width:1px;height:5px;background:#000"></div>
<svg class="a" style="left:63px;top:210px" width="16" height="14"><use href="#ic_ctl"/></svg>
<div class="t" style="left:86px;top:212px;font-size:12px;letter-spacing:-0.1px">proj...</div>
<div class="t" style="left:124px;top:212px;font-size:12px;letter-spacing:-0.1px">cosiStdProj...</div>
<div class="t" style="left:203px;top:212px;font-size:12px;letter-spacing:-0.1px">Main</div>
<div class="a" style="left:56px;top:231px;width:4px;height:1px;background-image:linear-gradient(to right,#C8B040 50%,transparent 50%);background-size:2px 1px"></div>
<div class="a" style="left:46px;top:227px;width:9px;height:9px;border:1px solid #C8B040;background:#fff"></div>
<div class="a" style="left:48px;top:231px;width:5px;height:1px;background:#000"></div>
<div class="a" style="left:50px;top:229px;width:1px;height:5px;background:#000"></div>
<svg class="a" style="left:63px;top:224px" width="16" height="14"><use href="#ic_ctl"/></svg>
<div class="t" style="left:86px;top:226px;font-size:12px;letter-spacing:-0.1px">pro...</div>
<div class="t" style="left:203px;top:226px;font-size:12px;letter-spacing:-0.1px">Main</div>
<div class="a" style="left:56px;top:245px;width:4px;height:1px;background-image:linear-gradient(to right,#C8B040 50%,transparent 50%);background-size:2px 1px"></div>
<div class="a" style="left:46px;top:241px;width:9px;height:9px;border:1px solid #C8B040;background:#fff"></div>
<div class="a" style="left:48px;top:245px;width:5px;height:1px;background:#000"></div>
<div class="a" style="left:50px;top:243px;width:1px;height:5px;background:#000"></div>
<svg class="a" style="left:63px;top:238px" width="16" height="14"><use href="#ic_ctl"/></svg>
<div class="t" style="left:86px;top:240px;font-size:12px;letter-spacing:-0.1px">tree</div>
<div class="t" style="left:124px;top:240px;font-size:12px;letter-spacing:-0.1px">cosiStdProj...</div>
<div class="t" style="left:203px;top:240px;font-size:12px;letter-spacing:-0.1px">Main</div>
<div class="a" style="left:56px;top:259px;width:4px;height:1px;background-image:linear-gradient(to right,#C8B040 50%,transparent 50%);background-size:2px 1px"></div>
<div class="a" style="left:46px;top:255px;width:9px;height:9px;border:1px solid #C8B040;background:#fff"></div>
<div class="a" style="left:48px;top:259px;width:5px;height:1px;background:#000"></div>
<div class="a" style="left:50px;top:257px;width:1px;height:5px;background:#000"></div>
<svg class="a" style="left:63px;top:252px" width="16" height="14"><use href="#ic_ctl"/></svg>
<div class="t" style="left:86px;top:254px;font-size:12px;letter-spacing:-0.1px">tre...</div>
<div class="t" style="left:203px;top:254px;font-size:12px;letter-spacing:-0.1px">Main</div>
<div class="a" style="left:56px;top:273px;width:4px;height:1px;background-image:linear-gradient(to right,#C8B040 50%,transparent 50%);background-size:2px 1px"></div>
<div class="a" style="left:46px;top:269px;width:9px;height:9px;border:1px solid #C8B040;background:#fff"></div>
<div class="a" style="left:48px;top:273px;width:5px;height:1px;background:#000"></div>
<div class="a" style="left:50px;top:271px;width:1px;height:5px;background:#000"></div>
<svg class="a" style="left:63px;top:266px" width="16" height="14"><use href="#ic_ctl"/></svg>
<div class="t" style="left:86px;top:268px;font-size:12px;letter-spacing:-0.1px">vxz</div>
<div class="t" style="left:203px;top:268px;font-size:12px;letter-spacing:-0.1px">Main</div>
<div class="a" style="left:56px;top:287px;width:4px;height:1px;background-image:linear-gradient(to right,#C8B040 50%,transparent 50%);background-size:2px 1px"></div>
<div class="a" style="left:46px;top:283px;width:9px;height:9px;border:1px solid #C8B040;background:#fff"></div>
<div class="a" style="left:48px;top:287px;width:5px;height:1px;background:#000"></div>
<div class="a" style="left:50px;top:285px;width:1px;height:5px;background:#000"></div>
<svg class="a" style="left:63px;top:280px" width="16" height="14"><use href="#ic_ctl"/></svg>
<div class="t" style="left:86px;top:282px;font-size:12px;letter-spacing:-0.1px">wor...</div>
<div class="t" style="left:203px;top:282px;font-size:12px;letter-spacing:-0.1px">Main</div>
<div class="a" style="left:16px;top:301px;width:4px;height:1px;background-image:linear-gradient(to right,#C8B040 50%,transparent 50%);background-size:2px 1px"></div>
<div class="a" style="left:6px;top:297px;width:9px;height:9px;border:1px solid #C8B040;background:#fff"></div>
<div class="a" style="left:8px;top:301px;width:5px;height:1px;background:#000"></div>
<div class="a" style="left:10px;top:299px;width:1px;height:5px;background:#000"></div>
<div class="t" style="left:24px;top:296px;font-size:12px;letter-spacing:-0.1px">ODC_Option</div>
<div class="a" style="left:16px;top:315px;width:4px;height:1px;background-image:linear-gradient(to right,#C8B040 50%,transparent 50%);background-size:2px 1px"></div>
<div class="a" style="left:6px;top:311px;width:9px;height:9px;border:1px solid #C8B040;background:#fff"></div>
<div class="a" style="left:8px;top:315px;width:5px;height:1px;background:#000"></div>
<div class="a" style="left:10px;top:313px;width:1px;height:5px;background:#000"></div>
<div class="t" style="left:24px;top:310px;font-size:12px;letter-spacing:-0.1px">ODC_Options</div>
<div class="a" style="left:16px;top:329px;width:4px;height:1px;background-image:linear-gradient(to right,#C8B040 50%,transparent 50%);background-size:2px 1px"></div>
<div class="a" style="left:6px;top:325px;width:9px;height:9px;border:1px solid #C8B040;background:#fff"></div>
<div class="a" style="left:8px;top:329px;width:5px;height:1px;background:#000"></div>
<div class="a" style="left:10px;top:327px;width:1px;height:5px;background:#000"></div>
<div class="t" style="left:24px;top:324px;font-size:12px;letter-spacing:-0.1px">ProgressData</div>
<div class="a" style="left:16px;top:343px;width:4px;height:1px;background-image:linear-gradient(to right,#C8B040 50%,transparent 50%);background-size:2px 1px"></div>
<div class="a" style="left:6px;top:339px;width:9px;height:9px;border:1px solid #C8B040;background:#fff"></div>
<div class="a" style="left:8px;top:343px;width:5px;height:1px;background:#000"></div>
<div class="a" style="left:10px;top:341px;width:1px;height:5px;background:#000"></div>
<div class="t" style="left:24px;top:338px;font-size:12px;letter-spacing:-0.9px">REAL</div>
<div class="a" style="left:16px;top:357px;width:4px;height:1px;background-image:linear-gradient(to right,#C8B040 50%,transparent 50%);background-size:2px 1px"></div>
<div class="a" style="left:6px;top:353px;width:9px;height:9px;border:1px solid #C8B040;background:#fff"></div>
<div class="a" style="left:8px;top:357px;width:5px;height:1px;background:#000"></div>
<div class="a" style="left:10px;top:355px;width:1px;height:5px;background:#000"></div>
<div class="t" style="left:24px;top:352px;font-size:12px;letter-spacing:-0.6px">STRING</div>
<div class="a" style="left:16px;top:371px;width:4px;height:1px;background-image:linear-gradient(to right,#C8B040 50%,transparent 50%);background-size:2px 1px"></div>
<div class="a" style="left:6px;top:367px;width:9px;height:9px;border:1px solid #C8B040;background:#fff"></div>
<div class="a" style="left:8px;top:371px;width:5px;height:1px;background:#000"></div>
<div class="a" style="left:10px;top:369px;width:1px;height:5px;background:#000"></div>
<div class="t" style="left:24px;top:366px;font-size:12px;letter-spacing:-0.1px">SearchWin</div>
<div class="a" style="left:16px;top:385px;width:4px;height:1px;background-image:linear-gradient(to right,#C8B040 50%,transparent 50%);background-size:2px 1px"></div>
<div class="a" style="left:6px;top:381px;width:9px;height:9px;border:1px solid #C8B040;background:#fff"></div>
<div class="a" style="left:8px;top:385px;width:5px;height:1px;background:#000"></div>
<div class="a" style="left:10px;top:383px;width:1px;height:5px;background:#000"></div>
<div class="t" style="left:24px;top:380px;font-size:12px;letter-spacing:-0.1px">TIME</div>
<div class="a" style="left:16px;top:399px;width:4px;height:1px;background-image:linear-gradient(to right,#C8B040 50%,transparent 50%);background-size:2px 1px"></div>
<div class="a" style="left:6px;top:395px;width:9px;height:9px;border:1px solid #C8B040;background:#fff"></div>
<div class="a" style="left:8px;top:399px;width:5px;height:1px;background:#000"></div>
<div class="a" style="left:10px;top:397px;width:1px;height:5px;background:#000"></div>
<div class="t" style="left:24px;top:394px;font-size:12px;letter-spacing:-0.1px">UINT</div>
</div><!--/TREE-->

<!-- splitter -->
<div class="a sh" style="left:311px;top:80px;width:1px;height:470px"></div>
<div class="a dk" style="left:312px;top:80px;width:1px;height:470px"></div>
<div class="a" style="left:313px;top:80px;width:1px;height:470px;background:#F8EEB8"></div>


<!-- ===== RIGHT PANEL ===== -->
<!-- top tabs -->
<div class="a hl" style="left:317px;top:93px;width:496px;height:1px"></div>
<svg class="a" style="left:313px;top:78px" width="504" height="20" viewBox="313 78 504 20">
<path d="M317.5 93 L321.5 84.5 Q322.5 81.5 325.5 81.5 L474.5 81.5 Q477.5 81.5 478.5 84.5 L482.5 93" fill="#E9E1A9" stroke="#000" stroke-width="1"/>
<path d="M483.5 95 L488 84 Q489 80.5 492 80.5 L641.5 80.5 Q644.5 80.5 645.5 83.5 L649.5 95 Z" fill="#fff"/>
<path d="M483.5 94 L488 84 Q489 80.5 492 80.5 L641.5 80.5 Q644.5 80.5 645.5 83.5 L649.5 94" fill="none" stroke="#000" stroke-width="1"/>
</svg>
<div class="t" style="left:377px;top:83px">Definition</div>
<div class="t" style="left:530px;top:82px">Text Definitions</div>

<!-- bottom tabs -->
<div class="a sh" style="left:317px;top:531px;width:496px;height:1px"></div>
<div class="a dk" style="left:317px;top:532px;width:496px;height:1px"></div>
<svg class="a" style="left:313px;top:528px" width="504" height="20" viewBox="313 528 504 20">
<path d="M317.5 532.5 L320.5 541 Q321.5 544.5 324.5 544.5 L432 544.5 Q435.5 544.5 436.5 541.5 L440.5 532.5" fill="#E9E1A9" stroke="#000" stroke-width="1"/>
<path d="M564.5 532.5 L568.5 541.5 Q569.5 544.5 572.5 544.5 L681 544.5 Q684 544.5 684.5 541.5 L687.5 532.5" fill="#E9E1A9" stroke="#000" stroke-width="1"/>
<path d="M441 531 L444.5 543 Q445.5 545.5 448.5 545.5 L557 545.5 Q560 545.5 560.5 543 L564 531 Z" fill="#fff"/>
<path d="M441 531 L444.5 543 Q445.5 545.5 448.5 545.5 L557 545.5 Q560 545.5 560.5 543 L564 531" fill="none" stroke="#000" stroke-width="1"/>
</svg>
<div class="t" style="left:362px;top:532px">Design</div>
<div class="t" style="left:477px;top:533px">Properties</div>
<div class="t" style="left:593px;top:532px">Context Class</div>

<!-- size grip -->
<svg class="a" style="left:804px;top:557px" width="13" height="13" viewBox="804 557 13 13" shape-rendering="crispEdges"><rect x="804" y="569" width="1" height="1" fill="#F6F1DA"/><rect x="805" y="568" width="1" height="1" fill="#F6F1DA"/><rect x="805" y="569" width="1" height="1" fill="#D2B946"/><rect x="806" y="567" width="1" height="1" fill="#F6F1DA"/><rect x="806" y="568" width="1" height="1" fill="#D2B946"/><rect x="806" y="569" width="1" height="1" fill="#D2B946"/><rect x="807" y="566" width="1" height="1" fill="#F6F1DA"/><rect x="807" y="567" width="1" height="1" fill="#D2B946"/><rect x="807" y="568" width="1" height="1" fill="#D2B946"/><rect x="808" y="565" width="1" height="1" fill="#F6F1DA"/><rect x="808" y="566" width="1" height="1" fill="#D2B946"/><rect x="808" y="567" width="1" height="1" fill="#D2B946"/><rect x="808" y="569" width="1" height="1" fill="#F6F1DA"/><rect x="809" y="564" width="1" height="1" fill="#F6F1DA"/><rect x="809" y="565" width="1" height="1" fill="#D2B946"/><rect x="809" y="566" width="1" height="1" fill="#D2B946"/><rect x="809" y="568" width="1" height="1" fill="#F6F1DA"/><rect x="809" y="569" width="1" height="1" fill="#D2B946"/><rect x="810" y="563" width="1" height="1" fill="#F6F1DA"/><rect x="810" y="564" width="1" height="1" fill="#D2B946"/><rect x="810" y="565" width="1" height="1" fill="#D2B946"/><rect x="810" y="567" width="1" height="1" fill="#F6F1DA"/><rect x="810" y="568" width="1" height="1" fill="#D2B946"/><rect x="810" y="569" width="1" height="1" fill="#D2B946"/><rect x="811" y="562" width="1" height="1" fill="#F6F1DA"/><rect x="811" y="563" width="1" height="1" fill="#D2B946"/><rect x="811" y="564" width="1" height="1" fill="#D2B946"/><rect x="811" y="566" width="1" height="1" fill="#F6F1DA"/><rect x="811" y="567" width="1" height="1" fill="#D2B946"/><rect x="811" y="568" width="1" height="1" fill="#D2B946"/><rect x="812" y="561" width="1" height="1" fill="#F6F1DA"/><rect x="812" y="562" width="1" height="1" fill="#D2B946"/><rect x="812" y="563" width="1" height="1" fill="#D2B946"/><rect x="812" y="565" width="1" height="1" fill="#F6F1DA"/><rect x="812" y="566" width="1" height="1" fill="#D2B946"/><rect x="812" y="567" width="1" height="1" fill="#D2B946"/><rect x="812" y="569" width="1" height="1" fill="#F6F1DA"/><rect x="813" y="560" width="1" height="1" fill="#F6F1DA"/><rect x="813" y="561" width="1" height="1" fill="#D2B946"/><rect x="813" y="562" width="1" height="1" fill="#D2B946"/><rect x="813" y="564" width="1" height="1" fill="#F6F1DA"/><rect x="813" y="565" width="1" height="1" fill="#D2B946"/><rect x="813" y="566" width="1" height="1" fill="#D2B946"/><rect x="813" y="568" width="1" height="1" fill="#F6F1DA"/><rect x="813" y="569" width="1" height="1" fill="#D2B946"/><rect x="814" y="559" width="1" height="1" fill="#F6F1DA"/><rect x="814" y="560" width="1" height="1" fill="#D2B946"/><rect x="814" y="561" width="1" height="1" fill="#D2B946"/><rect x="814" y="563" width="1" height="1" fill="#F6F1DA"/><rect x="814" y="564" width="1" height="1" fill="#D2B946"/><rect x="814" y="565" width="1" height="1" fill="#D2B946"/><rect x="814" y="567" width="1" height="1" fill="#F6F1DA"/><rect x="814" y="568" width="1" height="1" fill="#D2B946"/><rect x="814" y="569" width="1" height="1" fill="#D2B946"/><rect x="815" y="558" width="1" height="1" fill="#F6F1DA"/><rect x="815" y="559" width="1" height="1" fill="#D2B946"/><rect x="815" y="560" width="1" height="1" fill="#D2B946"/><rect x="815" y="562" width="1" height="1" fill="#F6F1DA"/><rect x="815" y="563" width="1" height="1" fill="#D2B946"/><rect x="815" y="564" width="1" height="1" fill="#D2B946"/><rect x="815" y="566" width="1" height="1" fill="#F6F1DA"/><rect x="815" y="567" width="1" height="1" fill="#D2B946"/><rect x="815" y="568" width="1" height="1" fill="#D2B946"/><rect x="816" y="557" width="1" height="1" fill="#F6F1DA"/><rect x="816" y="558" width="1" height="1" fill="#D2B946"/><rect x="816" y="559" width="1" height="1" fill="#D2B946"/><rect x="816" y="561" width="1" height="1" fill="#F6F1DA"/><rect x="816" y="562" width="1" height="1" fill="#D2B946"/><rect x="816" y="563" width="1" height="1" fill="#D2B946"/><rect x="816" y="565" width="1" height="1" fill="#F6F1DA"/><rect x="816" y="566" width="1" height="1" fill="#D2B946"/><rect x="816" y="567" width="1" height="1" fill="#D2B946"/></svg>

<!-- group frames -->
<div class="a" style="left:321px;top:99px;width:348px;height:277px;border:1px solid #F6F1DA;border-left-color:#D2B946;border-top-color:#D2B946"></div>
<div class="a" style="left:322px;top:100px;width:346px;height:275px;border:1px solid #D2B946;border-left-color:#F6F1DA;border-top-color:#F6F1DA"></div>
<div class="a" style="left:673px;top:99px;width:140px;height:277px;border:1px solid #F6F1DA;border-left-color:#D2B946;border-top-color:#D2B946"></div>
<div class="a" style="left:674px;top:100px;width:138px;height:275px;border:1px solid #D2B946;border-left-color:#F6F1DA;border-top-color:#F6F1DA"></div>

<!-- left group -->
<div class="t" style="left:327px;top:107px">Language</div>
<div class="t" style="left:327px;top:129px">Title</div>
<div class="t" style="left:327px;top:149px">Tool Tip</div>
<div class="t" style="left:327px;top:171px">Description</div>
<!--FIELDS--><div class="a hl" style="left:397px;top:105px;width:265px;height:20px"></div><div class="a sh" style="left:397px;top:105px;width:264px;height:19px"></div><div class="a fc" style="left:398px;top:106px;width:263px;height:18px"></div><div class="a dk" style="left:398px;top:106px;width:262px;height:17px"></div><div class="a" style="left:399px;top:107px;width:261px;height:16px;background:#fff"></div><div class="t" style="left:402px;top:110px;letter-spacing:0">English</div><div class="a dk" style="left:645px;top:107px;width:16px;height:16px"></div><div class="a fc" style="left:645px;top:107px;width:15px;height:15px"></div><div class="a sh" style="left:646px;top:108px;width:14px;height:14px"></div><div class="a hl" style="left:646px;top:108px;width:13px;height:13px"></div><div class="a fc" style="left:647px;top:109px;width:12px;height:12px"></div><svg class="a" style="left:649px;top:113px" width="7" height="4" viewBox="0 0 7 4"><path d="M0 0H7L3.5 4Z" fill="#000"/></svg><div class="a hl" style="left:397px;top:127px;width:265px;height:17px"></div><div class="a sh" style="left:397px;top:127px;width:264px;height:16px"></div><div class="a fc" style="left:398px;top:128px;width:263px;height:15px"></div><div class="a dk" style="left:398px;top:128px;width:262px;height:14px"></div><div class="a" style="left:399px;top:129px;width:261px;height:13px;background:#fff"></div><div class="a" style="left:399px;top:129px;width:261px;height:13px;overflow:hidden"><div class="t" style="left:3px;top:2px">Application name</div></div><div class="a hl" style="left:397px;top:147px;width:265px;height:17px"></div><div class="a sh" style="left:397px;top:147px;width:264px;height:16px"></div><div class="a fc" style="left:398px;top:148px;width:263px;height:15px"></div><div class="a dk" style="left:398px;top:148px;width:262px;height:14px"></div><div class="a" style="left:399px;top:149px;width:261px;height:13px;background:#fff"></div><div class="a" style="left:399px;top:149px;width:261px;height:13px;overflow:hidden"><div class="t" style="left:3px;top:1px">What is this good for</div></div><div class="a" style="left:327px;top:185px;width:336px;height:185px;background:#F6F1DA"></div><div class="a sh" style="left:327px;top:185px;width:335px;height:184px"></div><div class="a wh" style="left:328px;top:186px;width:334px;height:183px"></div><div class="a" style="left:332px;top:191px;width:325px;font-size:13px;line-height:16px;letter-spacing:0.06px;white-space:normal;font-family:'Liberation Sans',sans-serif">Specific<span style="display:inline-block;width:1px;height:15px;background:#000;vertical-align:top;margin:0;position:relative;top:-1px"></span> usage hints, e.g. how to start window specific actions.</div><div class="t" style="left:679px;top:107px">Horizontal</div><div class="a hl" style="left:679px;top:121px;width:127px;height:19px"></div><div class="a sh" style="left:679px;top:121px;width:126px;height:18px"></div><div class="a fc" style="left:680px;top:122px;width:125px;height:17px"></div><div class="a dk" style="left:680px;top:122px;width:124px;height:16px"></div><div class="a" style="left:681px;top:123px;width:123px;height:15px;background:#fff"></div><div class="t" style="left:685px;top:126px;letter-spacing:-0.25px">HPS_undefined</div><div class="a dk" style="left:789px;top:123px;width:16px;height:16px"></div><div class="a fc" style="left:789px;top:123px;width:15px;height:15px"></div><div class="a sh" style="left:790px;top:124px;width:14px;height:14px"></div><div class="a hl" style="left:790px;top:124px;width:13px;height:13px"></div><div class="a fc" style="left:791px;top:125px;width:12px;height:12px"></div><svg class="a" style="left:793px;top:129px" width="7" height="4" viewBox="0 0 7 4"><path d="M0 0H7L3.5 4Z" fill="#000"/></svg><div class="t" style="left:679px;top:143px">Vertical</div><div class="a hl" style="left:679px;top:157px;width:127px;height:19px"></div><div class="a sh" style="left:679px;top:157px;width:126px;height:18px"></div><div class="a fc" style="left:680px;top:158px;width:125px;height:17px"></div><div class="a dk" style="left:680px;top:158px;width:124px;height:16px"></div><div class="a" style="left:681px;top:159px;width:123px;height:15px;background:#fff"></div><div class="t" style="left:685px;top:162px;letter-spacing:-0.25px">VPS_undefined</div><div class="a dk" style="left:789px;top:159px;width:16px;height:16px"></div><div class="a fc" style="left:789px;top:159px;width:15px;height:15px"></div><div class="a sh" style="left:790px;top:160px;width:14px;height:14px"></div><div class="a hl" style="left:790px;top:160px;width:13px;height:13px"></div><div class="a fc" style="left:791px;top:161px;width:12px;height:12px"></div><svg class="a" style="left:793px;top:165px" width="7" height="4" viewBox="0 0 7 4"><path d="M0 0H7L3.5 4Z" fill="#000"/></svg><div class="t" style="left:679px;top:179px">Text</div><div class="a hl" style="left:679px;top:193px;width:127px;height:19px"></div><div class="a sh" style="left:679px;top:193px;width:126px;height:18px"></div><div class="a fc" style="left:680px;top:194px;width:125px;height:17px"></div><div class="a dk" style="left:680px;top:194px;width:124px;height:16px"></div><div class="a" style="left:681px;top:195px;width:123px;height:15px;background:#fff"></div><div class="t" style="left:685px;top:198px;letter-spacing:-0.25px">HPS_undefined</div><div class="a dk" style="left:789px;top:195px;width:16px;height:16px"></div><div class="a fc" style="left:789px;top:195px;width:15px;height:15px"></div><div class="a sh" style="left:790px;top:196px;width:14px;height:14px"></div><div class="a hl" style="left:790px;top:196px;width:13px;height:13px"></div><div class="a fc" style="left:791px;top:197px;width:12px;height:12px"></div><svg class="a" style="left:793px;top:201px" width="7" height="4" viewBox="0 0 7 4"><path d="M0 0H7L3.5 4Z" fill="#000"/></svg><div class="a hl" style="left:679px;top:279px;width:13px;height:13px"></div><div class="a sh" style="left:679px;top:279px;width:12px;height:12px"></div><div class="a fc" style="left:680px;top:280px;width:11px;height:11px"></div><div class="a dk" style="left:680px;top:280px;width:10px;height:10px"></div><div class="a" style="left:681px;top:281px;width:9px;height:9px;background:#fff"></div><svg class="a" style="left:682px;top:282px" width="7" height="7" viewBox="0 0 7 7" shape-rendering="crispEdges" fill="#000"><rect x="6" y="0" width="1" height="1"/><rect x="5" y="1" width="1" height="1"/><rect x="6" y="1" width="1" height="1"/><rect x="0" y="2" width="1" height="1"/><rect x="4" y="2" width="1" height="1"/><rect x="5" y="2" width="1" height="1"/><rect x="6" y="2" width="1" height="1"/><rect x="0" y="3" width="1" height="1"/><rect x="1" y="3" width="1" height="1"/><rect x="3" y="3" width="1" height="1"/><rect x="4" y="3" width="1" height="1"/><rect x="5" y="3" width="1" height="1"/><rect x="0" y="4" width="1" height="1"/><rect x="1" y="4" width="1" height="1"/><rect x="2" y="4" width="1" height="1"/><rect x="3" y="4" width="1" height="1"/><rect x="4" y="4" width="1" height="1"/><rect x="1" y="5" width="1" height="1"/><rect x="2" y="5" width="1" height="1"/><rect x="3" y="5" width="1" height="1"/><rect x="2" y="6" width="1" height="1"/></svg><div class="t" style="left:695px;top:280px;letter-spacing:-0.3px">Show Label</div><div class="t" style="left:679px;top:304px">Size</div><div class="a" style="left:679px;top:318px;width:128px;height:52px;border:1px solid #F6F1DA;border-left-color:#D2B946;border-top-color:#D2B946"></div><div class="a" style="left:680px;top:319px;width:126px;height:50px;border:1px solid #D2B946;border-left-color:#F6F1DA;border-top-color:#F6F1DA"></div><div class="t" style="left:686px;top:328px">Width</div><div class="a hl" style="left:720px;top:325px;width:81px;height:17px"></div><div class="a sh" style="left:720px;top:325px;width:80px;height:16px"></div><div class="a fc" style="left:721px;top:326px;width:79px;height:15px"></div><div class="a dk" style="left:721px;top:326px;width:78px;height:14px"></div><div class="a" style="left:722px;top:327px;width:77px;height:13px;background:#fff"></div><div class="a" style="left:722px;top:327px;width:77px;height:13px;overflow:hidden"><div class="t" style="left:4px;top:1px">0</div></div><div class="t" style="left:685px;top:348px">Height</div><div class="a hl" style="left:720px;top:345px;width:81px;height:17px"></div><div class="a sh" style="left:720px;top:345px;width:80px;height:16px"></div><div class="a fc" style="left:721px;top:346px;width:79px;height:15px"></div><div class="a dk" style="left:721px;top:346px;width:78px;height:14px"></div><div class="a" style="left:722px;top:347px;width:77px;height:13px;background:#fff"></div><div class="a" style="left:722px;top:347px;width:77px;height:13px;overflow:hidden"><div class="t" style="left:4px;top:1px">0</div></div><!--/FIELDS-->

</body></html>
